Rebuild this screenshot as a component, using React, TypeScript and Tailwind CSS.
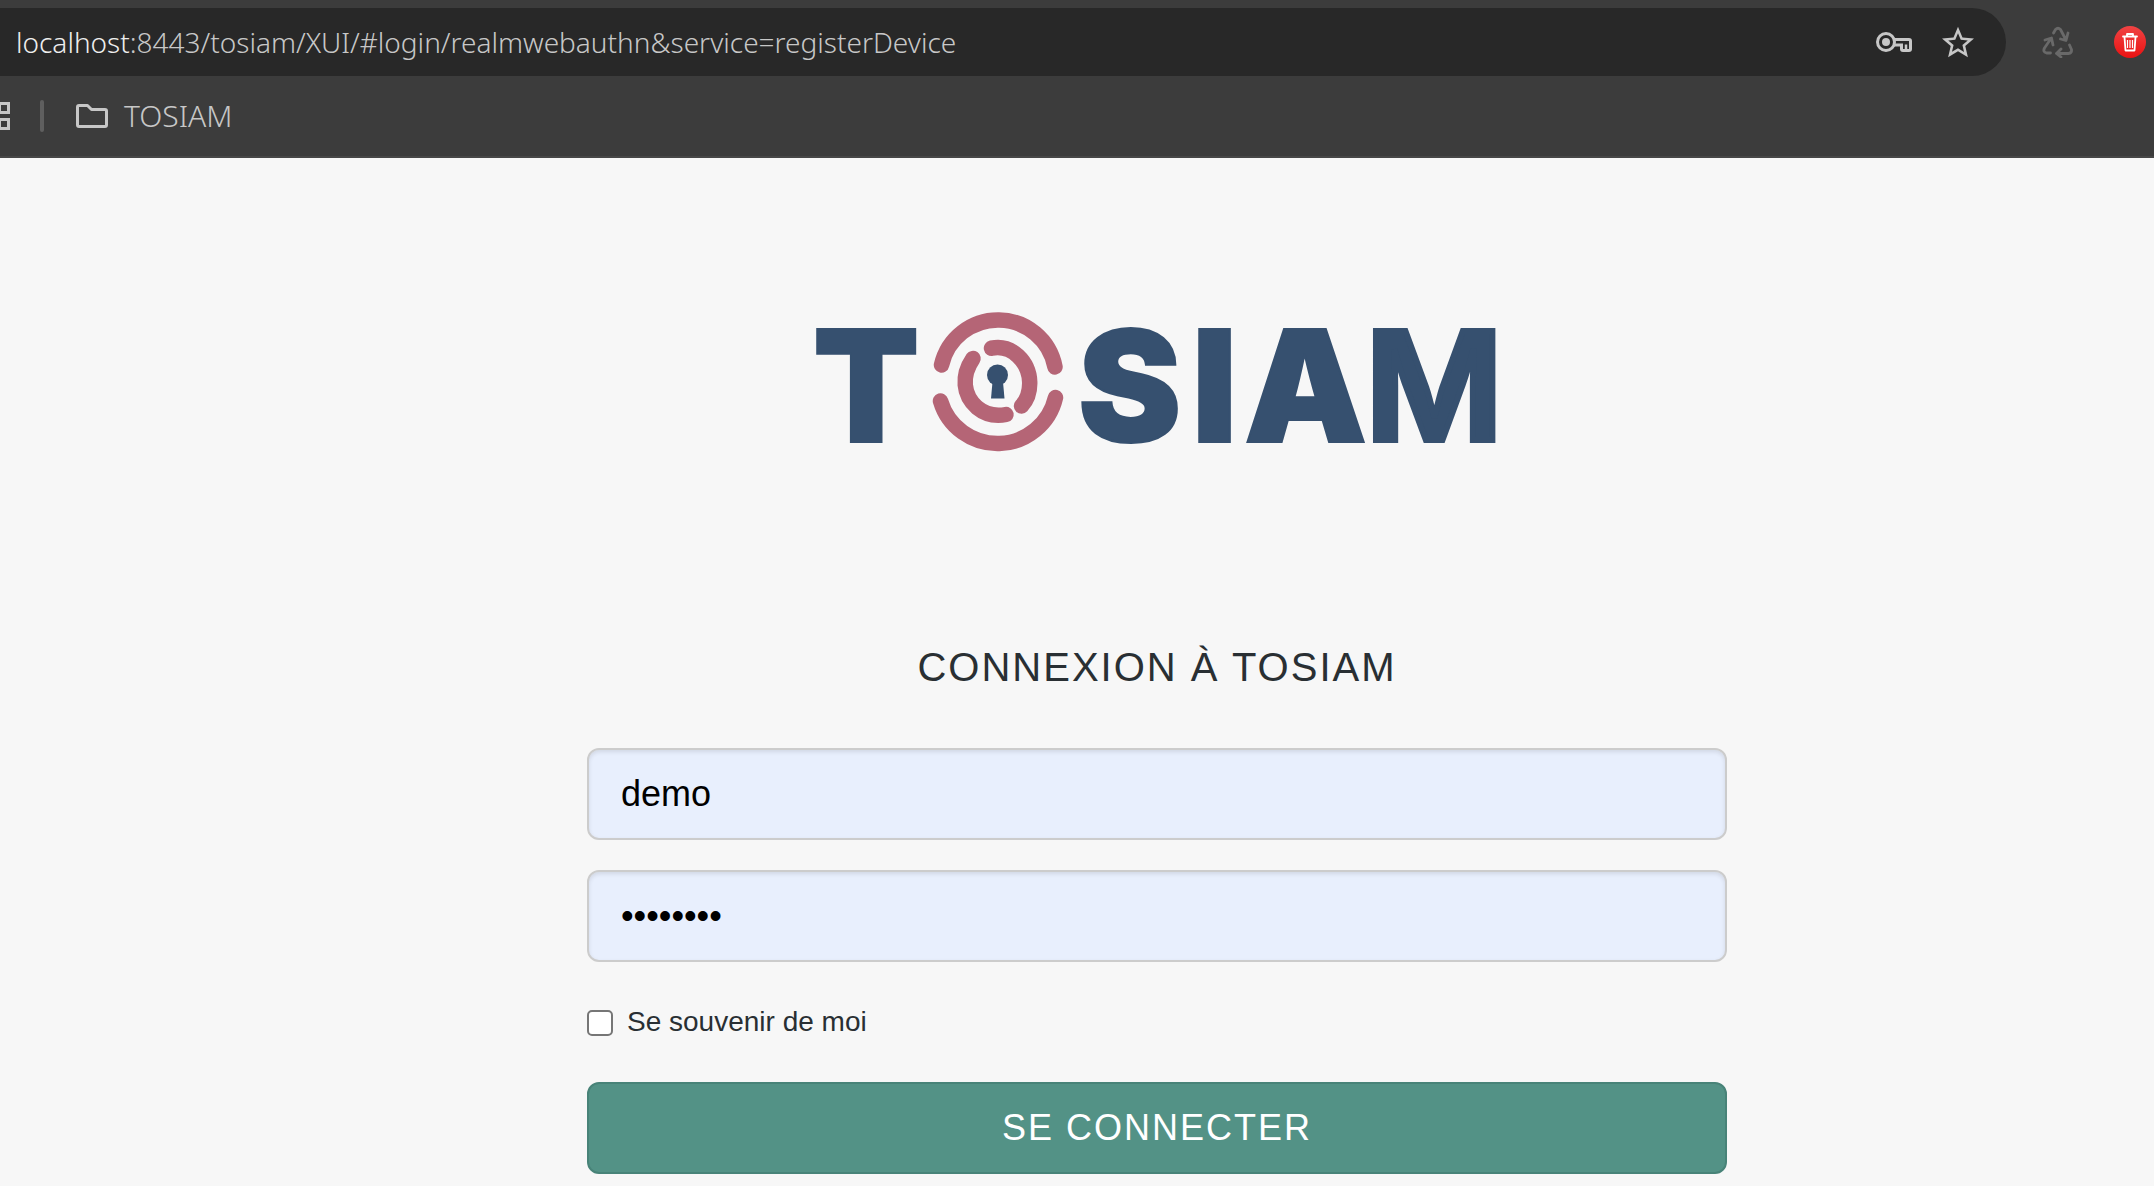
import React from "react";

const Key = () => (
  <svg width="36" height="20" viewBox="0 0 36 20" fill="none" stroke="#c7c7c7" strokeWidth="3" aria-hidden="true">
    <circle cx="10" cy="10" r="8.5" />
    <circle cx="10" cy="10" r="4" fill="#c7c7c7" stroke="none" />
    <path d="M18 7.5H33Q34.5 7.5 34.5 9V17Q34.5 18.5 33 18.5H27Q25.500 18.500 25.500 17V13H18" />
    <path d="M30 12.500V18" strokeWidth="2.500" />
  </svg>
);

const Star = () => (
  <svg width="32" height="32" viewBox="2 1.500 20 20" fill="#c7c7c7" aria-hidden="true">
    <path d="M22 9.240l-7.190-.620L12 2 9.190 8.630 2 9.240l5.460 4.730L5.820 21 12 17.270 18.180 21l-1.630-7.030L22 9.240zM12 15.400l-3.760 2.270 1-4.280-3.320-2.880 4.380-.380L12 6.100l1.710 4.040 4.380.380-3.320 2.880 1 4.280L12 15.400z" />
  </svg>
);

const Recycle = () => (
  <svg width="32" height="32" viewBox="0 0 32 32" fill="none" stroke="#696969" strokeWidth="2.800" strokeLinecap="round" strokeLinejoin="round" aria-hidden="true">
    <path d="M11.500 7L13.500 3.500Q16 1 18.500 3.500L24 14M18.500 13L24 14.500L26 7" />
    <path d="M27.500 19L29.500 23.500Q30 27 26.500 27.500H14.500M19 23L14.500 27.500L19 31" />
    <path d="M8.500 27H4.500Q0.500 26 2.500 22L9 12.500M3 14L9.500 12L11 19" />
  </svg>
);

const Trash = () => (
  <svg width="32" height="32" viewBox="0 0 32 32" fill="none" aria-hidden="true">
    <defs>
      <linearGradient id="trash-disc" x1="0" y1="0" x2="0" y2="1">
        <stop offset="0" stopColor="#f04343" />
        <stop offset="1" stopColor="#ea1212" />
      </linearGradient>
    </defs>
    <circle cx="16" cy="16" r="16" fill="url(#trash-disc)" />
    <path d="M9 10.500H23M13 10V8H19V10M10.500 11L11.500 24.500H20.500L21.500 11" stroke="#fff" strokeWidth="1.800" strokeLinejoin="round" strokeLinecap="round" />
    <path d="M13.500 14V22M16 14V22M18.500 14V22" stroke="#fff" strokeWidth="1.200" />
  </svg>
);

const Logo = () => (
  <svg className="w-[700px] max-w-full" viewBox="0 0 700 200" role="img" aria-label="TOSIAM">
    <g fill="#36506f" stroke="#36506f" strokeWidth="2" fontFamily="Inter, 'Liberation Sans', sans-serif" fontWeight="900" fontSize="155">
      <text x="6" y="152">T</text>
      <text x="271 385 437" y="152">SIA</text>
      <text x="558" y="150" fontSize="150" fontWeight="600" strokeWidth="6">M</text>
    </g>
    <g fill="none" stroke="#b56576" strokeWidth="15.500" strokeLinecap="round">
      <path d="M134.500 75A58 58 0 0 1 248 77" />
      <path d="M133.500 111A59.500 59.500 0 0 0 248.500 107.500" />
      <path d="M166 68.500C154 86 156 105 170 117.500C179 125 188 126.500 199 124.500" />
      <path d="M184.500 58.200C205 54 222 72 222.700 92C223 102 220 110 214.500 116" />
    </g>
    <circle cx="190.500" cy="85" r="10.500" fill="#36506f" />
    <path d="M185.500 92H196L197.500 108.500H184Z" fill="#36506f" />
  </svg>
);

export default function App() {
  const field =
    "block h-[92px] w-full rounded-xl border-2 border-[#cccccc] bg-[#e8effd] px-8 text-4xl text-black shadow-[inset_0_2px_4px_rgba(0,0,0,0.1)] outline-none";
  return (
    <div className="min-h-screen overflow-hidden bg-[#f7f7f7] font-['Liberation_Sans',Arial,sans-serif]">
      <header className="border-b-2 border-[#474747] bg-[#3c3c3c] pt-2 font-['Noto_Sans',sans-serif] font-light text-[#c7c7c7]">
        <div className="flex items-center pr-2">
          <div className="flex h-17 flex-1 items-center rounded-r-full bg-[#282828] pr-8 pl-4">
            <div role="textbox" aria-label="Address" className="flex-1 text-[28px] whitespace-nowrap">
              <span className="text-[#eeeeee]">localhost</span>:8443/tosiam/XUI/#login/realmwebauthn&amp;service=registerDevice
            </div>
            <div className="flex items-center gap-[30px]">
              <button type="button" aria-label="Passwords"><Key /></button>
              <button type="button" aria-label="Bookmark this page"><Star /></button>
            </div>
          </div>
          <div className="flex items-center gap-10 pl-9">
            <button type="button" aria-label="Recycle"><Recycle /></button>
            <button type="button" aria-label="Clear data"><Trash /></button>
          </div>
        </div>
        <nav className="flex h-20 items-center">
          <button type="button" aria-label="Apps">
            <svg width="10" height="28" viewBox="0 0 10 28" fill="none" stroke="#c7c7c7" strokeWidth="3" aria-hidden="true">
              <rect x="-0.500" y="1.500" width="9" height="9" />
              <rect x="-0.500" y="17.500" width="9" height="9" />
            </svg>
          </button>
          <span className="ml-[30px] h-8 w-1 rounded-full bg-[#5f5f5f]" />
          <a href="#tosiam" className="ml-8 flex items-center gap-4 text-[30px] leading-10">
            <svg width="32" height="24" viewBox="0 0 32 24" fill="none" stroke="#c7c7c7" strokeWidth="3" strokeLinejoin="round" aria-hidden="true">
              <path d="M3 1.500H11.500L15.500 5.500H29Q30.500 5.500 30.500 7V21Q30.500 22.500 29 22.500H3Q1.500 22.500 1.500 21V3Q1.500 1.500 3 1.500Z" />
            </svg>
            TOSIAM
          </a>
        </nav>
      </header>

      <main className="pt-33 pb-3 pl-40 text-[#292f33]">
        <div className="mx-auto max-w-[1140px]">
          <div className="flex justify-center"><Logo /></div>
          <h1 className="mt-38 text-center text-[40px] leading-[50px] tracking-[2px]">CONNEXION À TOSIAM</h1>
          <form className="mt-14" onSubmit={(e) => e.preventDefault()}>
            <input className={field} type="text" aria-label="Nom d'utilisateur" defaultValue="demo" />
            <input className={`mt-[30px] ${field}`} type="password" aria-label="Mot de passe" defaultValue="password" />
            <label className="mt-10 flex h-10 w-fit items-center gap-[14px] text-[28px]">
              <input type="checkbox" className="mt-0.5 size-[26px] appearance-none rounded-[5px] border-2 border-[#767676] bg-white" />
              Se souvenir de moi
            </label>
            <button type="submit" className="mt-10 block h-[92px] w-full rounded-xl border-2 border-[#488378] bg-[#539286] text-4xl tracking-[2px] text-white">
              SE CONNECTER
            </button>
          </form>
        </div>
      </main>
    </div>
  );
}
